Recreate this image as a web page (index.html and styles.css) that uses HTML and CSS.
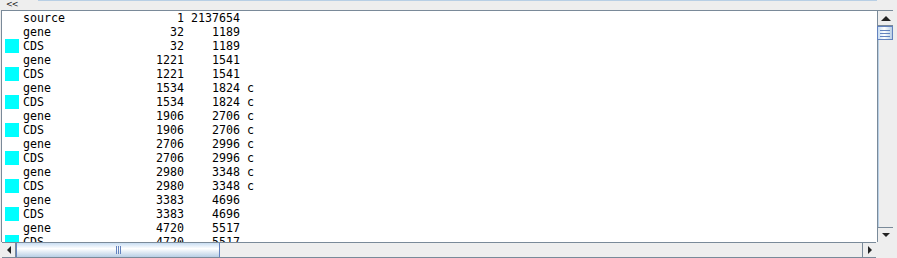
FILE: index.html
```html
<!DOCTYPE html>
<html lang="en">
<head>
<meta charset="UTF-8">
<title>Feature List</title>
<link rel="stylesheet" href="styles.css">
</head>
<body>
<div class="frame">
  <div class="topbar"><span class="back">&lt;&lt;</span><span class="topline"></span></div>
  <div class="middle">
    <div class="list">
      <div class="row"><span class="mark"></span><span class="key">source</span><span class="num">1</span><span class="num wide">2137654</span><span class="strand"></span></div>
      <div class="row"><span class="mark"></span><span class="key">gene</span><span class="num">32</span><span class="num wide">1189</span><span class="strand"></span></div>
      <div class="row"><span class="mark cds"></span><span class="key">CDS</span><span class="num">32</span><span class="num wide">1189</span><span class="strand"></span></div>
      <div class="row"><span class="mark"></span><span class="key">gene</span><span class="num">1221</span><span class="num wide">1541</span><span class="strand"></span></div>
      <div class="row"><span class="mark cds"></span><span class="key">CDS</span><span class="num">1221</span><span class="num wide">1541</span><span class="strand"></span></div>
      <div class="row"><span class="mark"></span><span class="key">gene</span><span class="num">1534</span><span class="num wide">1824</span><span class="strand">c</span></div>
      <div class="row"><span class="mark cds"></span><span class="key">CDS</span><span class="num">1534</span><span class="num wide">1824</span><span class="strand">c</span></div>
      <div class="row"><span class="mark"></span><span class="key">gene</span><span class="num">1906</span><span class="num wide">2706</span><span class="strand">c</span></div>
      <div class="row"><span class="mark cds"></span><span class="key">CDS</span><span class="num">1906</span><span class="num wide">2706</span><span class="strand">c</span></div>
      <div class="row"><span class="mark"></span><span class="key">gene</span><span class="num">2706</span><span class="num wide">2996</span><span class="strand">c</span></div>
      <div class="row"><span class="mark cds"></span><span class="key">CDS</span><span class="num">2706</span><span class="num wide">2996</span><span class="strand">c</span></div>
      <div class="row"><span class="mark"></span><span class="key">gene</span><span class="num">2980</span><span class="num wide">3348</span><span class="strand">c</span></div>
      <div class="row"><span class="mark cds"></span><span class="key">CDS</span><span class="num">2980</span><span class="num wide">3348</span><span class="strand">c</span></div>
      <div class="row"><span class="mark"></span><span class="key">gene</span><span class="num">3383</span><span class="num wide">4696</span><span class="strand"></span></div>
      <div class="row"><span class="mark cds"></span><span class="key">CDS</span><span class="num">3383</span><span class="num wide">4696</span><span class="strand"></span></div>
      <div class="row"><span class="mark"></span><span class="key">gene</span><span class="num">4720</span><span class="num wide">5517</span><span class="strand"></span></div>
      <div class="row"><span class="mark cds"></span><span class="key">CDS</span><span class="num">4720</span><span class="num wide">5517</span><span class="strand"></span></div>
    </div>
    <div class="vscroll">
      <div class="btn up"><span class="tri-up"></span></div>
      <div class="vthumb"><span></span><span></span><span></span></div>
      <div class="vtrack"></div>
      <div class="btn down"><span class="tri-down"></span></div>
    </div>
    <div class="gutter"></div>
  </div>
  <div class="bottom">
    <div class="hscroll">
      <div class="hbtn"><span class="tri-left"></span></div>
      <div class="hthumb"><span></span><span></span><span></span></div>
      <div class="htrack"></div>
      <div class="hbtn"><span class="tri-right"></span></div>
    </div>
    <div class="corner"></div>
  </div>
</div>
</body>
</html>
```

FILE: styles.css
```css
body {
  margin: 0;
  background: #eeeeee;
  font-family: "DejaVu Sans Mono", monospace;
}
.frame {
  width: 897px;
  height: 258px;
  display: flex;
  flex-direction: column;
  overflow: hidden;
}
.topbar {
  height: 10px;
  display: flex;
  align-items: flex-start;
  background: #eeeeee;
}
.back {
  width: 38px;
  height: 10px;
  font-family: "DejaVu Sans", sans-serif;
  font-size: 8px;
  line-height: 9px;
  padding-left: 6px;
  box-sizing: border-box;
  color: #222;
  letter-spacing: -1px;
}
.topline {
  width: 839px;
  height: 1px;
  background: #b8cfe5;
}
.middle {
  height: 232px;
  display: flex;
}
.list {
  flex: 1;
  background: #fff;
  border-top: 1px solid #7a8a99;
  border-left: 1px solid #7a8a99;
  margin-left: 1px;
  overflow: hidden;
}
.row {
  height: 14px;
  display: flex;
  align-items: stretch;
  font-size: 11.63px;
  line-height: 14px;
  color: #000;
  white-space: pre;
}
.mark {
  width: 14px;
  margin-left: 3px;
  margin-right: 4px;
}
.mark.cds {
  background: #00ffff;
}
.key {
  width: 16ch;
}
.num {
  width: 7ch;
  text-align: right;
}
.num.wide {
  width: 8ch;
}
.strand {
  width: 2ch;
  text-align: right;
}
.vscroll {
  width: 16px;
  display: flex;
  flex-direction: column;
  background: #eeeeee;
  border-top: 1px solid #7a8a99;
  box-sizing: border-box;
}
.btn {
  height: 15px;
  display: flex;
  align-items: center;
  justify-content: center;
  background: #eeeeee;
  border-left: 1px solid #7a8a99;
  box-sizing: border-box;
}
.btn.up {
  border-bottom: 1px solid #7a8a99;
}
.btn.down {
  border-top: 1px solid #7a8a99;
}
.tri-up {
  border-left: 5px solid transparent;
  border-right: 5px solid transparent;
  border-bottom: 5px solid #222;
}
.tri-down {
  border-left: 4px solid transparent;
  border-right: 4px solid transparent;
  border-top: 4px solid #222;
}
.vthumb {
  height: 14px;
  background: linear-gradient(to right, #c8ddf2, #ffffff 45%, #b8cfe5);
  border: 1px solid #6382be;
  box-sizing: border-box;
  display: flex;
  flex-direction: column;
  justify-content: center;
  gap: 2px;
  align-items: center;
}
.vthumb span {
  width: 10px;
  height: 1px;
  background: #6382be;
}
.vtrack {
  flex: 1;
  border-left: 1px solid #7a8a99;
  box-shadow: inset 1px 0 0 #b8cfe5;
}
.gutter {
  width: 4px;
  background: #eeeeee;
}
.bottom {
  height: 16px;
  display: flex;
}
.hscroll {
  width: 874px;
  margin-left: 2px;
  display: flex;
  background: #eeeeee;
  border-top: 1px solid #7a8a99;
  border-bottom: 1px solid #7a8a99;
  box-sizing: border-box;
}
.hbtn {
  width: 13px;
  display: flex;
  align-items: center;
  justify-content: center;
  border-right: 1px solid #7a8a99;
}
.hbtn:last-child {
  border-right: none;
  border-left: 1px solid #7a8a99;
}
.tri-left {
  border-top: 4px solid transparent;
  border-bottom: 4px solid transparent;
  border-right: 4px solid #222;
}
.tri-right {
  border-top: 4px solid transparent;
  border-bottom: 4px solid transparent;
  border-left: 4px solid #222;
}
.hthumb {
  width: 202px;
  background: linear-gradient(#c8ddf2, #ffffff 40%, #b8cfe5);
  border: 1px solid #6382be;
  border-top: none;
  border-bottom: none;
  display: flex;
  justify-content: center;
  align-items: center;
  gap: 1px;
}
.hthumb span {
  width: 1px;
  height: 8px;
  background: #6382be;
}
.htrack {
  flex: 1;
}
.corner {
  flex: 1;
  background: #eeeeee;
}
```
